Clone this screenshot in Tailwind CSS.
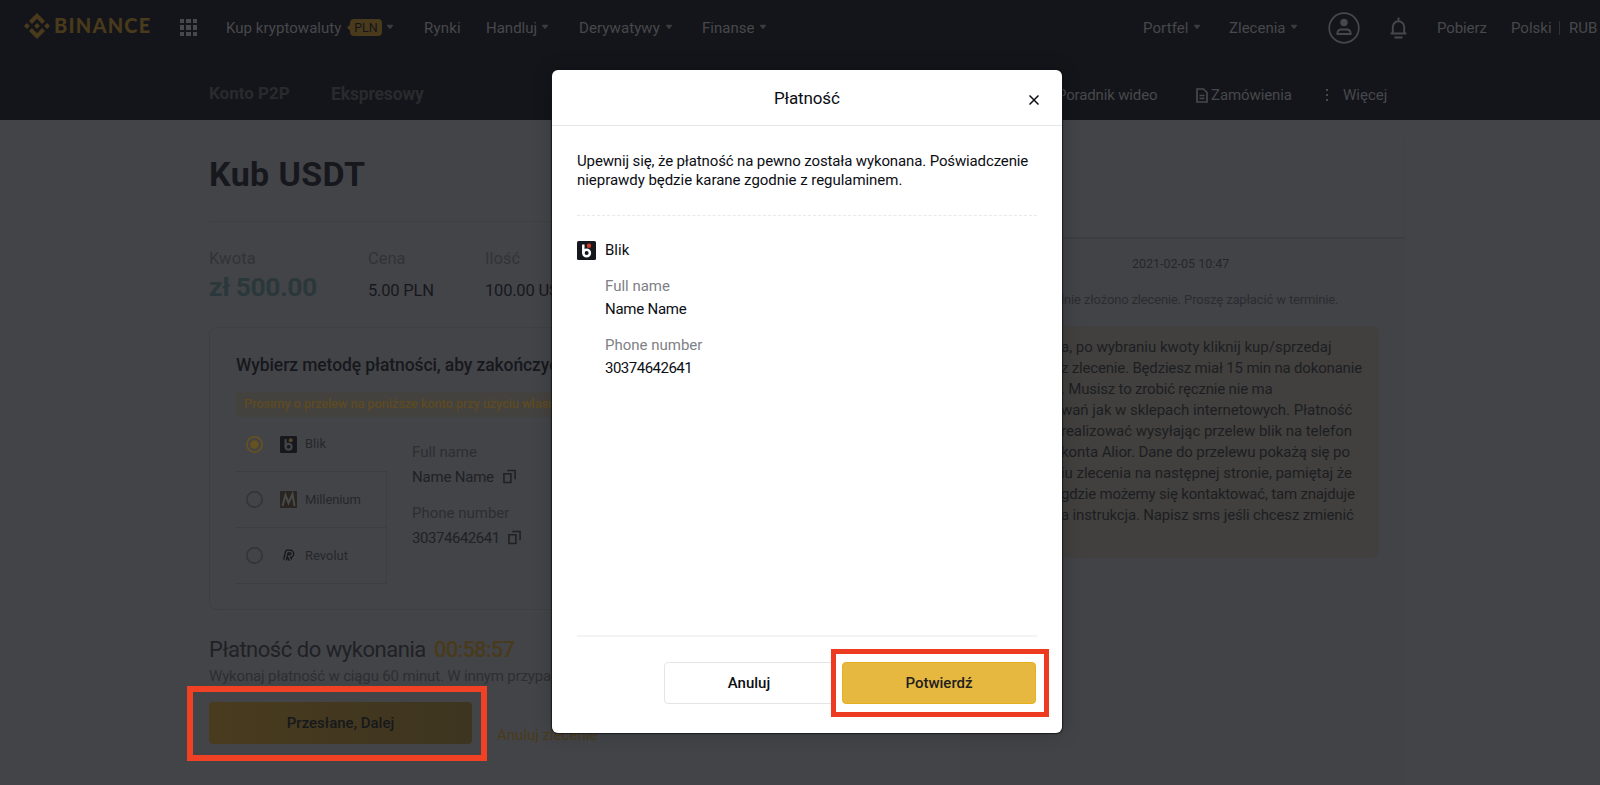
<!DOCTYPE html>
<html lang="pl">
<head>
    <meta charset="UTF-8">
    <meta name="viewport" content="width=device-width, initial-scale=1.0">
    <title>Binance P2P - Płatność</title>
    <script src="https://cdn.jsdelivr.net/npm/@tailwindcss/browser@4"></script>
</head>
<body class="relative w-[1600px] h-[785px] overflow-hidden bg-[#434448] font-['Roboto',sans-serif] text-[#17181d] whitespace-nowrap">

<!-- shared icons -->
<svg class="hidden">
    <symbol id="caret" viewBox="0 0 8 6"><path d="M0.8 1.4C0.8 0.9 1.2 0.7 1.6 0.7h4.8c0.5 0 0.8 0.3 0.8 0.7L4 5.2z" fill="#3a3b3f"/></symbol>
    <symbol id="copy" viewBox="0 0 14 15"><path d="M1 4.5h7.5V14H1zM4.5 1H13v9.5" fill="none" stroke="currentColor" stroke-width="1.7"/></symbol>
    <symbol id="blik" viewBox="0 0 19 19">
        <rect width="19" height="19" rx="1.5" fill="currentColor"/>
        <path d="M6.3 3.5v9" stroke="var(--glyph)" stroke-width="2.5"/>
        <circle cx="9.6" cy="12" r="3.3" fill="none" stroke="var(--glyph)" stroke-width="2.5"/>
        <circle cx="12" cy="4.8" r="2.2" fill="var(--dot)"/>
    </symbol>
</svg>

<header class="h-[120px] bg-[#14151a] text-[#47484c]">
    <div class="flex items-center h-[56px] pl-[24px] text-[15px]">
        <svg class="-mt-[4px] w-[26px] h-[26px] text-[#493a1b]" viewBox="0 0 126.6 126.6" fill="currentColor">
            <path d="M38.7 53.2l24.6-24.6 24.6 24.6 14.3-14.3L63.3 0 24.4 38.9zM0 63.3L14.3 49l14.3 14.3-14.3 14.3zM38.7 73.4l24.6 24.6 24.6-24.6 14.3 14.3-38.9 38.9-38.9-38.9zM98 63.3L112.3 49l14.3 14.3-14.3 14.3zM77.8 63.3L63.3 48.8 48.8 63.3l14.5 14.5z"/>
        </svg>
        <span class="-mt-[6px] ml-[4px] w-[97px] font-['Lato'] font-black text-[20px] tracking-[1.2px] text-[#493a1b]">BINANCE</span>
        <div class="-mt-[1px] ml-[29px] grid grid-cols-3 gap-[2px] w-[17px] h-[17px]">
            <i class="bg-current"></i><i class="bg-current"></i><i class="bg-current"></i>
            <i class="bg-current"></i><i class="bg-current"></i><i class="bg-current"></i>
            <i class="bg-current"></i><i class="bg-current"></i><i class="bg-current"></i>
        </div>
        <div class="ml-[29px] w-[198px] flex items-center">
            <span class="w-[121px] tracking-[0.05px]">Kup kryptowaluty</span>
            <span class="relative -mt-[1px] w-[35px] h-[17px] pl-[3px]">
                <svg class="absolute inset-0" viewBox="0 0 35 17"><path d="M0 8.5L3 5.5V4a4 4 0 0 1 4-4h24a4 4 0 0 1 4 4v9a4 4 0 0 1-4 4H7a4 4 0 0 1-4-4v-1.5z" fill="#493a1b"/></svg>
                <span class="relative block text-center text-[12.5px] leading-[17px] text-[#14151a]">PLN</span>
            </span>
            <svg class="-mt-[2px] ml-[4px] w-[8px] h-[6px]"><use href="#caret"/></svg>
        </div>
        <span class="w-[62px] tracking-[0.2px]">Rynki</span>
        <div class="w-[93px] flex items-center"><span class="w-[55px]">Handluj</span><svg class="-mt-[2px] w-[8px] h-[6px]"><use href="#caret"/></svg></div>
        <div class="w-[123px] flex items-center"><span class="w-[86px] tracking-[0.1px]">Derywatywy</span><svg class="-mt-[2px] w-[8px] h-[6px]"><use href="#caret"/></svg></div>
        <div class="w-[441px] flex items-center"><span class="w-[57px]">Finanse</span><svg class="-mt-[2px] w-[8px] h-[6px]"><use href="#caret"/></svg></div>
        <div class="w-[86px] flex items-center"><span class="w-[50px] tracking-[0.1px]">Portfel</span><svg class="-mt-[2px] w-[8px] h-[6px]"><use href="#caret"/></svg></div>
        <div class="w-[99px] flex items-center"><span class="w-[61px]">Zlecenia</span><svg class="-mt-[2px] w-[8px] h-[6px]"><use href="#caret"/></svg></div>
        <svg class="-mt-[1px] w-[32px] h-[32px]" viewBox="0 0 32 32"><circle cx="16" cy="16" r="14.8" fill="none" stroke="currentColor" stroke-width="1.7"/><circle cx="16" cy="10.5" r="3.7" fill="currentColor"/><path d="M9.5 22v-1a3.5 3.5 0 0 1 3.5-3.500h6a3.5 3.5 0 0 1 3.5 3.5v1z" fill="none" stroke="currentColor" stroke-width="2"/></svg>
        <svg class="-mt-[1px] ml-[29px] w-[19px] h-[22px]" viewBox="0 0 19 22" fill="none" stroke="currentColor" stroke-width="1.9"><path d="M9.5 0.5v3M3.8 15.5v-5.5a5.7 5.7 0 0 1 11.4 0v5.5l2 1H1.8zM5.5 20.5h8"/></svg>
        <span class="ml-[29px] w-[74px] tracking-[-0.1px]">Pobierz</span>
        <span class="w-[48px]">Polski</span>
        <span class="w-[1px] h-[14px] bg-[#303135]"></span>
        <span class="ml-[9px]">RUB</span>
    </div>
    <div class="flex items-center h-[80px] -mt-[3px] pl-[209px] text-[15px]">
        <span class="w-[122px] mt-[2px] font-bold text-[17px] text-[#292a2e]">Konto P2P</span>
        <span class="w-[726px] mt-[2px] font-bold text-[17.5px] tracking-[-0.15px] text-[#292a2e]">Ekspresowy</span>
        <span class="w-[139px] mt-[5px] tracking-[-0.15px]">Poradnik wideo</span>
        <svg class="mt-[5px] w-[12px] h-[15px]" viewBox="0 0 12 15" fill="none" stroke="currentColor" stroke-width="1.7"><path d="M1 1h6.5L11 4.5V14H1zM3.5 7.5h5M3.5 10.5h5"/></svg>
        <span class="ml-[3px] w-[114px] mt-[5px] tracking-[-0.1px]">Zamówienia</span>
        <svg class="mt-[3px] w-[4px] h-[12px]" viewBox="0 0 4 12" fill="currentColor"><path d="M1 0h2v2H1zM1 5h2v2H1zM1 10h2v2H1z"/></svg>
        <span class="ml-[14px] mt-[4px]">Więcej</span>
    </div>
</header>

<div class="flex pl-[209px]">
    <main class="w-[751px]">
        <h1 class="h-[102px] pt-[30px] font-bold text-[34px] tracking-[0.4px] leading-[48px] border-b border-[#3e3f43]">Kub USDT</h1>
        <div class="flex pt-[26px] h-[105px] leading-[22px]">
            <div class="w-[159px]">
                <div class="text-[16.5px] tracking-[0.2px] text-[#323337]">Kwota</div>
                <div class="font-bold text-[26.5px] tracking-[-0.45px] leading-[34px] text-[#2a383b]">zł 500.00</div>
            </div>
            <div class="w-[117px]">
                <div class="text-[16.5px] text-[#323337]">Cena</div>
                <div class="mt-[10px] text-[16.5px] tracking-[-0.2px]">5.00 PLN</div>
            </div>
            <div>
                <div class="text-[16.5px] text-[#323337]">Ilość</div>
                <div class="mt-[10px] text-[16.5px] tracking-[-0.2px]">100.00 USDT</div>
            </div>
        </div>

        <section class="h-[283px] border border-[#3e3f43] rounded-lg pl-[26px] pt-[24px]">
            <h2 class="h-[40px] font-medium text-[17.5px] tracking-[-0.1px] leading-[26px]">Wybierz metodę płatności, aby zakończyć</h2>
            <p class="h-[25px] bg-[#43423f] pl-[8px] text-[13px] font-medium tracking-[-0.2px] leading-[24px] text-[#5e4a22]">Prosimy o przelew na poniższe konto przy użyciu własnego</p>
            <div class="flex">
                <div class="w-[151px] text-[13px] text-[#26272b]">
                    <div class="flex items-center h-[54px] pl-[10px]">
                        <svg class="w-[17px] h-[17px]" viewBox="0 0 17 17"><circle cx="8.5" cy="8.5" r="7.6" fill="none" stroke="#66521f" stroke-width="1.7"/><circle cx="8.5" cy="8.5" r="4.3" fill="#66521f"/></svg>
                        <svg class="ml-[17px] w-[17px] h-[17px] text-[#17181d] [--glyph:#434448] [--dot:#54482f]"><use href="#blik" width="17" height="17"/></svg>
                        <span class="ml-[8px]">Blik</span>
                    </div>
                    <div class="flex items-center h-[56px] pl-[10px] border-t border-r border-[#3d3e42]">
                        <svg class="w-[17px] h-[17px]" viewBox="0 0 17 17"><circle cx="8.5" cy="8.5" r="7.7" fill="none" stroke="#323337" stroke-width="1.5"/></svg>
                        <svg class="ml-[17px] w-[17px] h-[17px]" viewBox="0 0 17 17"><rect width="17" height="17" rx="1" fill="#292621"/><path d="M2.5 15L5.5 4 8.5 12l4-9 2 12" fill="none" stroke="#4a4a4a" stroke-width="2"/></svg>
                        <span class="ml-[8px] tracking-[-0.1px]">Millenium</span>
                    </div>
                    <div class="flex items-center h-[57px] pl-[10px] border-y border-r border-[#3d3e42]">
                        <svg class="w-[17px] h-[17px]" viewBox="0 0 17 17"><circle cx="8.5" cy="8.5" r="7.7" fill="none" stroke="#323337" stroke-width="1.5"/></svg>
                        <svg class="ml-[17px] w-[17px] h-[17px]" viewBox="0 0 17 17" fill="none" stroke-linejoin="round"><path d="M5 13L7 4.5h3a2 2 0 0 1 0 4.5H8.5l2 4" stroke="#121316" stroke-width="4"/><path d="M5 13L7 4.5h3a2 2 0 0 1 0 4.5H8.5l2 4" stroke="#434448" stroke-width="1.6"/></svg>
                        <span class="ml-[8px]">Revolut</span>
                    </div>
                </div>
                <div class="pl-[25px] pt-[23px] text-[15px] leading-[25px] text-[#202125]">
                    <div class="text-[#2d2e32]">Full name</div>
                    <div class="flex items-center tracking-[-0.2px]"><span class="w-[91px]">Name Name</span><svg class="-mt-[2px] w-[13px] h-[15px]"><use href="#copy"/></svg></div>
                    <div class="mt-[11px] text-[#2d2e32]">Phone number</div>
                    <div class="flex items-center"><span class="w-[96px] tracking-[-0.45px]">30374642641</span><svg class="-mt-[2px] w-[13px] h-[15px]"><use href="#copy"/></svg></div>
                </div>
            </div>
        </section>

        <div class="mt-[26px] flex leading-[28px] text-[22px]">
            <span class="w-[225px] tracking-[-0.47px] text-[#202125]">Płatność do wykonania</span>
            <span class="text-[#493a1b] font-medium tracking-[-0.8px]">00:58:57</span>
        </div>
        <p class="mt-[1px] text-[15px] tracking-[-0.15px] leading-[22px] text-[#2d2e32]">Wykonaj płatność w ciągu 60 minut. W innym przypadku</p>
        <div class="mt-[15px] flex">
            <button class="w-[263px] h-[42px] rounded bg-linear-to-r from-[#493b1e] to-[#3d3520] font-medium text-[15px]">Przesłane, Dalej</button>
            <a class="ml-[25px] mt-[22px] text-[15px] leading-[22px] text-[#493a1b]">Anuluj zlecenie</a>
        </div>
    </main>

    <aside class="w-[445px] mt-[19px] h-[646px] bg-[#424347]">
        <div class="h-[100px] bg-[#434448] border-r border-b-2 border-r-[#404145] border-b-[#3d3e42]"></div>
        <div class="pl-[100px] leading-[20px] text-[12.5px]">
            <div class="pl-[72px] pt-[15px] text-[#26272b]">2021-02-05 10:47</div>
            <div class="pl-[1px] pt-[16px] text-[13px] tracking-[-0.15px] text-[#2b2c30]">lnie złożono zlecenie. Proszę zapłacić w terminie.</div>
        </div>
        <div class="mt-[16px] h-[232px] w-[419px] rounded-lg bg-[#41403e] pl-[101px] pt-[11px] text-[15px] tracking-[-0.12px] leading-[21px] text-[#1d1e22]">
            <p class="tracking-[-0.02px]">a, po wybraniu kwoty kliknij kup/sprzedaj</p>
            <p class="tracking-[-0.18px]">z zlecenie. Będziesz miał 15 min na dokonanie</p>
            <p class="tracking-[-0.19px]">. Musisz to zrobić ręcznie nie ma</p>
            <p class="tracking-[-0.05px]">wań jak w sklepach internetowych. Płatność</p>
            <p class="tracking-[-0.05px]">realizować wysyłając przelew blik na telefon</p>
            <p class="tracking-[-0.1px]">konta Alior. Dane do przelewu pokażą się po</p>
            <p class="tracking-[-0.05px]">iu zlecenia na następnej stronie, pamiętaj że</p>
            <p class="tracking-[-0.19px]">gdzie możemy się kontaktować, tam znajduje</p>
            <p class="tracking-[-0.16px]">a instrukcja. Napisz sms jeśli chcesz zmienić</p>
        </div>
    </aside>
</div>

<!-- payment confirmation dialog -->
<div class="absolute left-[552px] top-[70px] w-[510px] h-[663px] rounded-md bg-white text-[#0c0e14] text-[15px] shadow-[0_0_20px_rgba(0,0,0,0.2),0_0_1px_1px_rgba(20,21,26,0.8)]">
    <div class="flex items-center h-[56px] pl-[222px] pr-[23px] border-b border-[#e4e5e6]">
        <span class="grow pt-[2px] text-[17px] tracking-[-0.15px]">Płatność</span>
        <svg class="mt-[4px] w-[10px] h-[10px]" viewBox="0 0 10 10"><path d="M0.5 0.5l9 9M9.5 0.5l-9 9" stroke="currentColor" stroke-width="1.5"/></svg>
    </div>
    <div class="px-[25px]">
        <p class="h-[90px] pt-[26px] leading-[19px] border-b border-dashed border-[#e8e9ea]"><span class="tracking-[-0.13px]">Upewnij się, że płatność na pewno została wykonana. Poświadczenie</span><br><span class="tracking-[-0.04px]">nieprawdy będzie karane zgodnie z regulaminem.</span></p>
        <div class="h-[421px] pt-[23px] border-b-2 border-[#f4f4f5]">
            <div class="flex items-center h-[22px]">
                <svg class="w-[19px] h-[19px] text-[#17181d] [--glyph:white] [--dot:#d43b26]"><use href="#blik"/></svg>
                <span class="ml-[9px]">Blik</span>
            </div>
            <div class="pl-[28px] pt-[14px] leading-[23px]">
                <div class="text-[#808186]">Full name</div>
                <div class="tracking-[-0.25px]">Name Name</div>
                <div class="mt-[13px] text-[#808186]">Phone number</div>
                <div class="tracking-[-0.5px]">30374642641</div>
            </div>
        </div>
        <div class="flex pt-[25px] pl-[87px] font-medium">
            <button class="w-[170px] h-[42px] rounded border border-[#e4e5e6]">Anuluj</button>
            <button class="ml-[8px] w-[194px] h-[42px] rounded border border-[#e6b01c] bg-[#e6b840] text-[#22201f]">Potwierdź</button>
        </div>
    </div>
    <div class="absolute left-[279px] top-[579px] w-[218px] h-[68px] border-[5px] border-[#ec3b20]"></div>
</div>

<div class="absolute left-[187px] top-[686px] w-[300px] h-[75px] border-[6px] border-[#f04124]"></div>

</body>
</html>
